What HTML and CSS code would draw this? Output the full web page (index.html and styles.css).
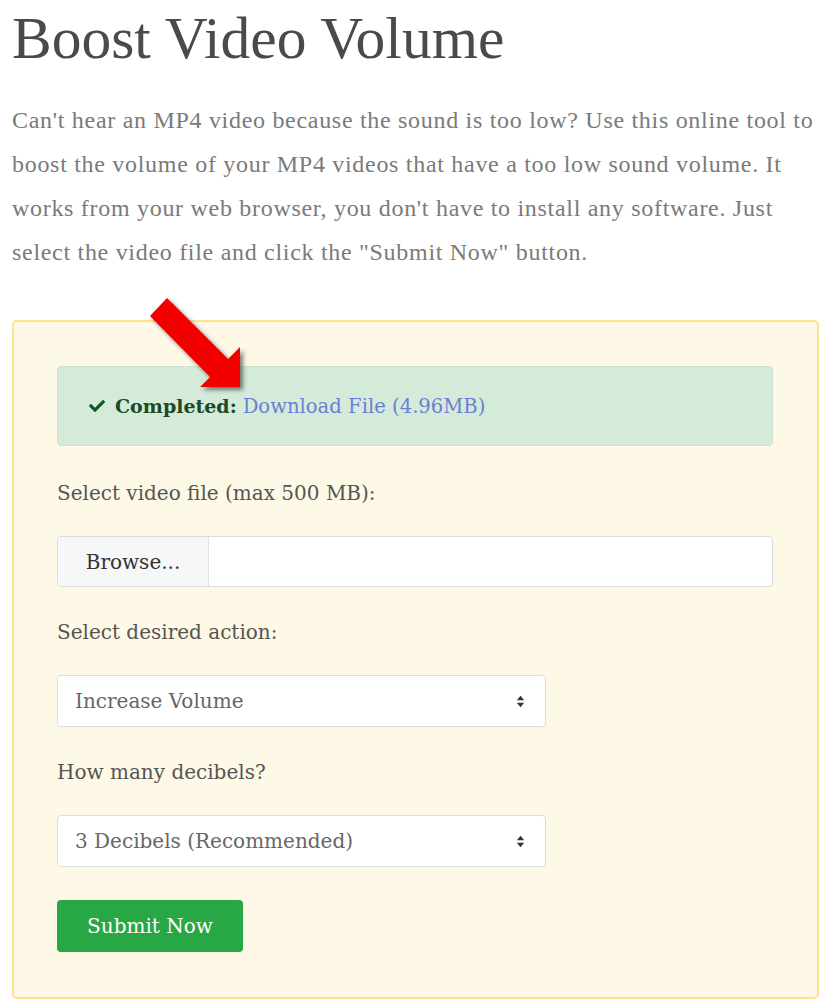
FILE: index.html
```html
<!DOCTYPE html>
<html lang="en">
<head>
    <meta charset="UTF-8">
    <meta name="viewport" content="width=device-width, initial-scale=1.0">
    <title>Boost Video Volume</title>
    <link rel="stylesheet" href="styles.css">
</head>
<body>
    <div class="page">
        <h1>Boost Video Volume</h1>
        <p class="intro">Can't hear an MP4 video because the sound is too low? Use this online tool to boost the volume of your MP4 videos that have a too low sound volume. It works from your web browser, you don't have to install any software. Just select the video file and click the "Submit Now" button.</p>

        <div class="tool-box">
            <div class="alert-success">
                <svg class="check" viewBox="0 0 512 512" width="16" height="16"><path d="M173.9 439.4l-166.4-166.4c-10-10-10-26.2 0-36.2l36.2-36.2c10-10 26.2-10 36.2 0L192 312.7 432.1 72.6c10-10 26.2-10 36.2 0l36.2 36.2c10 10 10 26.2 0 36.2L210.1 439.4c-10 10-26.2 10-36.2 0z" fill="#155724"/></svg>
                <strong>Completed:</strong>
                <a href="#">Download File (4.96MB)</a>
            </div>

            <div class="field">
                <label>Select video file (max 500 MB):</label>
                <div class="file-input">
                    <span class="browse">Browse...</span>
                    <span class="file-name"></span>
                </div>
            </div>

            <div class="field">
                <label>Select desired action:</label>
                <div class="select">
                    <span>Increase Volume</span>
                    <svg viewBox="0 0 10 16" width="9" height="13"><path d="M5 1 L9.5 6.5 H0.5 Z M5 15 L9.5 9.5 H0.5 Z" fill="#333"/></svg>
                </div>
            </div>

            <div class="field last">
                <label>How many decibels?</label>
                <div class="select">
                    <span>3 Decibels (Recommended)</span>
                    <svg viewBox="0 0 10 16" width="9" height="13"><path d="M5 1 L9.5 6.5 H0.5 Z M5 15 L9.5 9.5 H0.5 Z" fill="#333"/></svg>
                </div>
            </div>

            <button class="submit">Submit Now</button>
        </div>

        <!-- red pointer over the download link -->
        <svg class="pointer" viewBox="0 0 120 110" width="120" height="110">
            <polygon points="10,26 70,87 60,97 100,97 100,57 88,69 27,8" fill="#f20000"/>
        </svg>
    </div>
</body>
</html>
```

FILE: styles.css
```css
body {
    margin: 0;
    padding: 0;
    background-color: #fff;
    font-family: "DejaVu Serif", serif;
    color: #555;
}
.page {
    position: relative;
    padding: 3px 11px 0 12px;
}
h1 {
    font-family: "Liberation Serif", serif;
    font-weight: normal;
    font-size: 59.5px;
    line-height: 70px;
    color: #4a4a4a;
    margin: 0;
}
.intro {
    font-family: "Liberation Serif", serif;
    font-size: 24px;
    letter-spacing: 0.7px;
    line-height: 44px;
    color: #7a7a7a;
    margin: 25px 0 0 0;
}
.tool-box {
    margin-top: 46px;
    background-color: #fef8e6;
    border: 2px solid #fde38a;
    border-radius: 5px;
    padding: 44px 44px 45px 43px;
}
.alert-success {
    display: flex;
    align-items: center;
    height: 78px;
    padding: 0 31px;
    background-color: #d4ebd9;
    border: 1px solid #c7e4ce;
    border-radius: 4px;
    font-size: 19px;
    margin-bottom: 33px;
}
.check {
    margin-right: 10px;
}
.alert-success strong {
    color: #1d4a25;
    margin-right: 6px;
}
.alert-success a {
    color: #6c7fd6;
    font-size: 19.6px;
    text-decoration: none;
}
.field {
    margin-bottom: 31px;
}
.field.last {
    margin-bottom: 33px;
}
.field label {
    display: block;
    font-size: 20px;
    line-height: 28px;
    margin-bottom: 29px;
    color: #555;
}
.file-input {
    display: flex;
    height: 49px;
    background-color: #fff;
    border: 1px solid #dcdcdc;
    border-radius: 4px;
    overflow: hidden;
}
.browse {
    display: flex;
    align-items: center;
    justify-content: center;
    width: 150px;
    background-color: #f6f7f9;
    border-right: 1px solid #e2e2e2;
    color: #333;
    font-size: 20px;
}
.file-name {
    flex: 1;
}
.select {
    display: flex;
    align-items: center;
    justify-content: space-between;
    width: 450px;
    height: 50px;
    padding: 0 20px 0 17px;
    background-color: #fff;
    border: 1px solid #dcdcdc;
    border-radius: 4px;
    font-size: 20px;
    color: #666;
}
.submit {
    display: block;
    width: 186px;
    height: 52px;
    background-color: #28a745;
    border: none;
    border-radius: 4px;
    color: #fff;
    font-family: "DejaVu Serif", serif;
    font-size: 20px;
    cursor: pointer;
}
.pointer {
    position: absolute;
    left: 140px;
    top: 290px;
    filter: drop-shadow(3px 3px 2px rgba(40, 40, 40, 0.6));
}
```
